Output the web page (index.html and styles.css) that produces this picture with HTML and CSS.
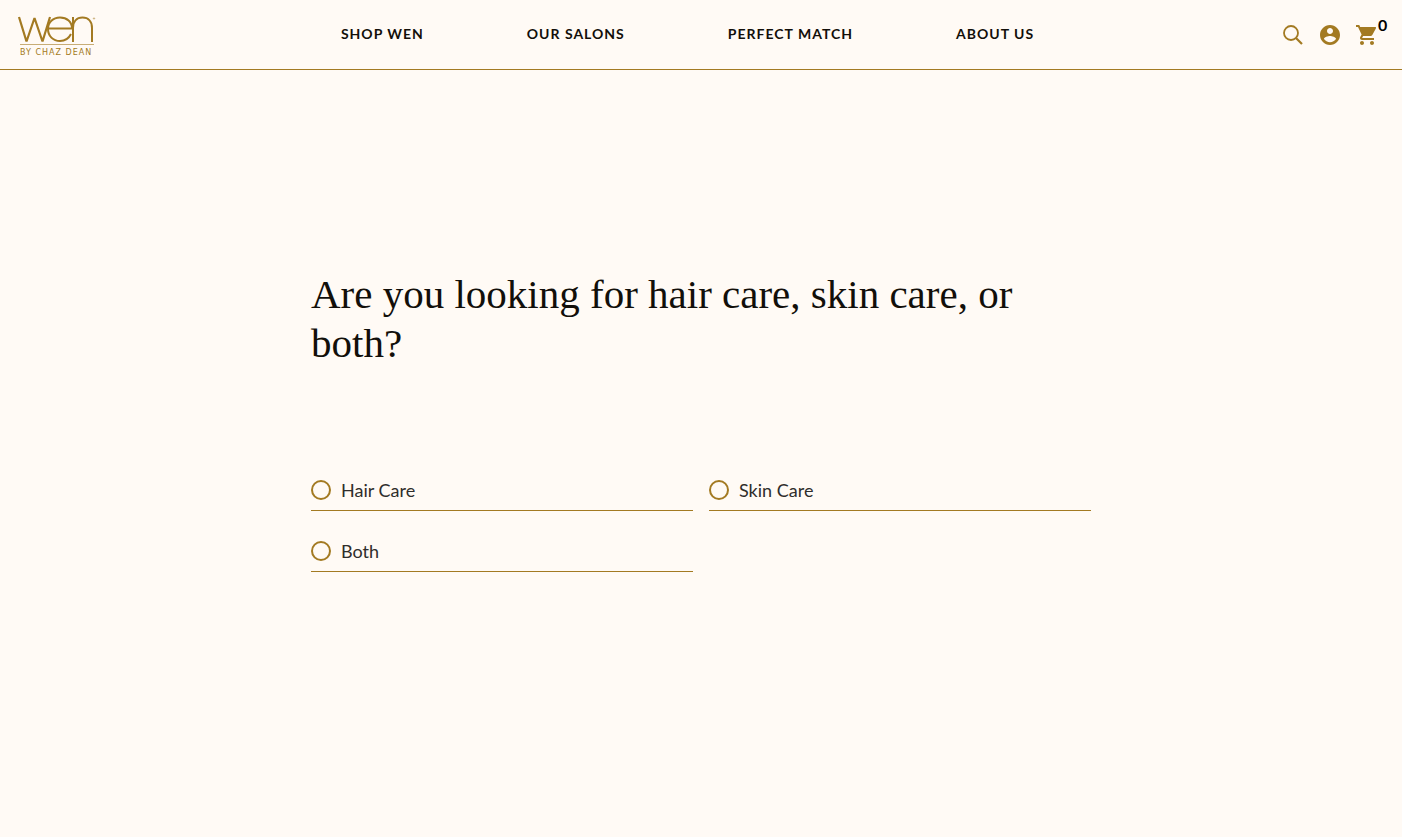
FILE: index.html
```html
<!DOCTYPE html>
<html lang="en">
<head>
<meta charset="utf-8">
<meta name="viewport" content="width=device-width, initial-scale=1">
<title>Perfect Match | WEN by Chaz Dean</title>
<link rel="stylesheet" href="styles.css">
</head>
<body>
<header class="header">
  <a class="logo" href="#" aria-label="WEN by Chaz Dean">
    <svg width="80" height="42" viewBox="0 0 80 42" fill="none" stroke="currentColor">
      <path stroke-width="2.200" stroke-linejoin="bevel" d="M2 1L9.500 25.500L17.500 2L25.500 25.500L33 1"/>
      <path stroke-width="2" d="M31 12.500H55C55 6 50 1.500 43 1.500C36 1.500 31 6.300 31 13C31 20 36 25 43 25C48 25 52 22 54 18"/>
      <path stroke-width="2" d="M56 26V1M56 12C56 5.500 59.500 1.500 65.500 1.500C71.500 1.500 75 5.500 75 12V26"/>
      <circle cx="77" cy="2.500" r="0.700" stroke-width="0.500"/>
      <path stroke-width="1" opacity="0.600" d="M3 28.500H77"/>
      <text class="logo-tagline" x="3" y="39">BY CHAZ DEAN</text>
    </svg>
  </a>
  <nav class="nav" aria-label="Main">
    <a href="#">SHOP WEN</a>
    <a href="#">OUR SALONS</a>
    <a href="#">PERFECT MATCH</a>
    <a href="#">ABOUT US</a>
  </nav>
  <div class="tools">
    <button class="tool" type="button" aria-label="Search">
      <svg width="20" height="20" viewBox="0 0 20 20" fill="none" stroke="currentColor"><circle cx="8" cy="8" r="7" stroke-width="1.800"/><path stroke-width="2.200" d="M13 13L19 19"/></svg>
    </button>
    <a class="tool" href="#" aria-label="Account">
      <svg width="24" height="24" viewBox="0 0 24 24" fill="currentColor"><path d="M12 2C6.480 2 2 6.480 2 12s4.480 10 10 10 10-4.480 10-10S17.520 2 12 2zm0 3c1.660 0 3 1.340 3 3s-1.340 3-3 3-3-1.340-3-3 1.340-3 3-3zm0 14.200c-2.500 0-4.710-1.280-6-3.220.03-1.990 4-3.080 6-3.080 1.990 0 5.970 1.090 6 3.080-1.290 1.940-3.500 3.220-6 3.220z"/></svg>
    </a>
    <a class="tool cart" href="#" aria-label="Cart, 0 items">
      <svg width="24" height="24" viewBox="0 0 24 24" fill="currentColor"><path d="M7 18c-1.100 0-1.990.9-1.990 2S5.900 22 7 22s2-.9 2-2-.9-2-2-2zM1 2v2h2l3.600 7.590-1.350 2.450c-.16.280-.25.610-.25.960 0 1.100.9 2 2 2h12v-2H7.420c-.14 0-.25-.11-.25-.25l.03-.12.900-1.630h7.450c.75 0 1.410-.41 1.750-1.030l3.580-6.490A1 1 0 0 0 20 4H5.210l-.94-2H1zm16 16c-1.100 0-1.990.9-1.990 2s.89 2 1.990 2 2-.9 2-2-.9-2-2-2z"/></svg>
      <span class="cart-count">0</span>
    </a>
  </div>
</header>
<main class="quiz">
  <form>
    <h1 class="question" id="question">Are you looking for hair care, skin care, or both?</h1>
    <div class="options" role="radiogroup" aria-labelledby="question">
      <label class="option"><input type="radio" name="care" value="hair">Hair Care</label>
      <label class="option"><input type="radio" name="care" value="skin">Skin Care</label>
      <label class="option"><input type="radio" name="care" value="both">Both</label>
    </div>
  </form>
</main>
</body>
</html>
```
FILE: styles.css
```css
* { box-sizing: border-box; }

body {
  margin: 0;
  background: #fffaf5;
  color: #120f0a;
  font-family: Lato, "Liberation Sans", sans-serif;
}

.header {
  display: grid;
  grid-template-columns: 1fr auto 1fr;
  align-items: center;
  height: 70px;
  padding: 0 12px 0 17px;
  border-bottom: 1px solid #a37a22;
}

.logo,
.tool { color: #a37a22; }

.logo { justify-self: start; padding-top: 4px; }
.logo svg { display: block; }

.logo-tagline {
  fill: currentColor;
  stroke: none;
  font-family: "DejaVu Sans", sans-serif;
  font-size: 8px;
  letter-spacing: 1px;
}

.nav {
  display: flex;
  gap: 103px;
  margin-right: 32px;
  padding-bottom: 2px;
}

.nav a {
  color: inherit;
  font-size: 14px;
  font-weight: 700;
  line-height: 20px;
  letter-spacing: 1px;
  text-decoration: none;
  white-space: nowrap;
}

.tools {
  display: flex;
  align-items: center;
  justify-self: end;
  gap: 13px;
}

.tool {
  display: grid;
  place-items: center;
  width: 24px;
  height: 24px;
  padding: 0;
  border: 0;
  background: none;
}

.cart {
  position: relative;
  margin-right: 11px;
}

.cart-count {
  position: absolute;
  top: -6px;
  left: 23px;
  color: #000;
  font-size: 16px;
  font-weight: 700;
  line-height: 16px;
}

.quiz {
  max-width: 812px;
  margin: 0 auto;
  padding: 200px 16px 40px;
}

.question {
  margin: 0 0 101px;
  font-family: "Liberation Serif", serif;
  font-size: 41px;
  font-weight: 400;
  line-height: 49px;
}

.options {
  display: grid;
  grid-template-columns: 1fr 1fr;
  gap: 19px 16px;
}

.option {
  display: flex;
  align-items: center;
  gap: 10px;
  height: 42px;
  border-bottom: 1px solid #a37a22;
  color: #2f2d2b;
  font-size: 18px;
  line-height: 24px;
}

.option input {
  appearance: none;
  width: 20px;
  height: 20px;
  margin: 0;
  border: 2px solid #a37a22;
  border-radius: 50%;
}

.option input:checked {
  background: #a37a22;
  box-shadow: inset 0 0 0 3px #fffaf5;
}
```
